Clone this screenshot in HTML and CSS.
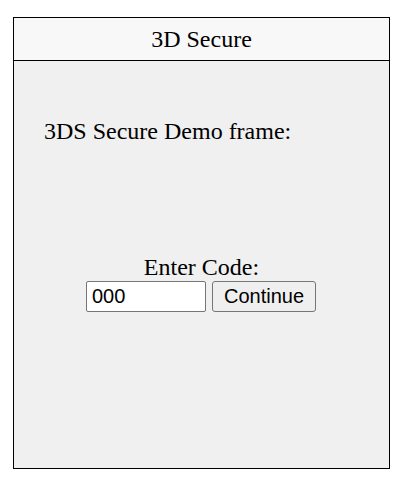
FILE: index.html
```html
<!DOCTYPE html>
<html>
<head>
<meta charset="utf-8">
<link rel="stylesheet" href="styles.css">
</head>
<body>
<div class="frame">
  <div class="header">3D Secure</div>
  <div class="content">
    <div class="title">3DS Secure Demo frame:</div>
    <div class="form">
      <div class="label">Enter Code:</div>
      <div class="row">
        <input class="code" type="text" value="000">
        <button class="btn">Continue</button>
      </div>
    </div>
  </div>
</div>
</body>
</html>
```

FILE: styles.css
```css
html, body {
  margin: 0;
  padding: 0;
  background: #ffffff;
}
body {
  padding: 17px 0 0 13px;
  font-family: "Liberation Serif", "Times New Roman", serif;
  color: #000;
}
.frame {
  box-sizing: border-box;
  width: 377px;
  height: 452px;
  border: 1px solid #000;
  background: #f0f0f0;
  display: flex;
  flex-direction: column;
}
.header {
  box-sizing: border-box;
  height: 43px;
  border-bottom: 1px solid #000;
  background: #f8f8f8;
  display: flex;
  align-items: center;
  justify-content: center;
  font-size: 24px;
  line-height: 28px;
}
.content {
  padding: 56px 0 0 30px;
}
.title {
  font-size: 24px;
  line-height: 28px;
}
.form {
  margin-left: -30px;
  margin-top: 108px;
  display: flex;
  flex-direction: column;
  align-items: center;
}
.label {
  font-size: 24px;
  line-height: 28px;
}
.row {
  display: flex;
  align-items: flex-start;
  gap: 6px;
  padding-right: 1px;
}
.code {
  box-sizing: border-box;
  width: 120px;
  height: 31px;
  margin: 0;
  font-family: "Liberation Sans", Arial, sans-serif;
  font-size: 20px;
  padding: 1px 5px;
  border: 1px solid #767676;
  border-radius: 2px;
  background: #fff;
}
.btn {
  box-sizing: border-box;
  height: 31px;
  margin: 0;
  font-family: "Liberation Sans", Arial, sans-serif;
  font-size: 20px;
  padding: 1px 11px;
  border: 1px solid #767676;
  border-radius: 3px;
  background: #efefef;
  color: #000;
}
```
